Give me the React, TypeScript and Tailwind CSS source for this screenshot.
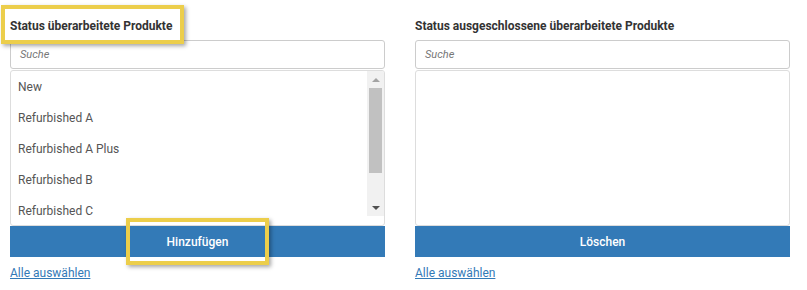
import React from "react"

const items = ["New", "Refurbished A", "Refurbished A Plus", "Refurbished B", "Refurbished C", "Refurbished D"]

function Scrollbar() {
  return (
    <div className="flex w-[17px] shrink-0 flex-col items-center bg-[#f1f1f1]">
      <div className="flex h-[17px] w-full items-center justify-center">
        <div className="h-0 w-0 border-x-[4px] border-b-[4px] border-x-transparent border-b-[#a3a3a3]" />
      </div>
      <div className="h-[85px] w-[13px] bg-[#c1c1c1]" />
      <div className="flex-1" />
      <div className="flex h-[17px] w-full items-center justify-center">
        <div className="h-0 w-0 border-x-[4px] border-t-[4px] border-x-transparent border-t-[#505050]" />
      </div>
    </div>
  )
}

type ColumnProps = {
  title: string
  action: string
  list?: string[]
  highlightTitle?: boolean
  highlightAction?: boolean
}

function Column({ title, action, list, highlightTitle, highlightAction }: ColumnProps) {
  return (
    <div className="relative flex w-[375px] flex-col">
      <div className="mt-[18px] h-4 text-[12px] font-bold leading-4 text-[#333]">{title}</div>
      {highlightTitle && (
        <div className="absolute left-[-9px] top-[5px] h-[39px] w-[183px] border-[4px] border-[#ecce4b] shadow-[2px_2px_4px_rgba(0,0,0,0.35)]" />
      )}
      <div className="mt-[6px] flex h-[29px] items-center rounded-[3px] border border-[#ccc] px-[9px]">
        <span className="mt-px text-[11px] italic text-[#777]">Suche</span>
      </div>
      <div className="mt-px h-[156px] overflow-hidden rounded-[3px] border border-[#ddd] bg-white pb-[9px]">
        <div className="flex h-full">
          <div className="flex-1 overflow-hidden">
            {list?.map((item) => (
              <div key={item} className="flex h-[31px] items-center px-[7px] text-[12px] text-[#555]">
                {item}
              </div>
            ))}
          </div>
          {list && <Scrollbar />}
        </div>
      </div>
      <button className="flex h-[31px] items-center justify-center bg-[#337ab7] text-[12px] font-medium text-white">
        {action}
      </button>
      {highlightAction && (
        <div className="absolute left-[116px] top-[218px] h-[47px] w-[143px] border-[4px] border-[#ecce4b] shadow-[2px_2px_4px_rgba(0,0,0,0.35)]" />
      )}
      <a href="#" className="mt-[8px] w-fit text-[12px] leading-4 text-[#337ab7] underline">
        Alle auswählen
      </a>
    </div>
  )
}

export default function App() {
  return (
    <div className="flex h-[290px] w-[807px] gap-[30px] bg-white pl-[10px] font-['Roboto',sans-serif]">
      <Column title="Status überarbeitete Produkte" action="Hinzufügen" list={items} highlightTitle highlightAction />
      <Column title="Status ausgeschlossene überarbeitete Produkte" action="Löschen" />
    </div>
  )
}
